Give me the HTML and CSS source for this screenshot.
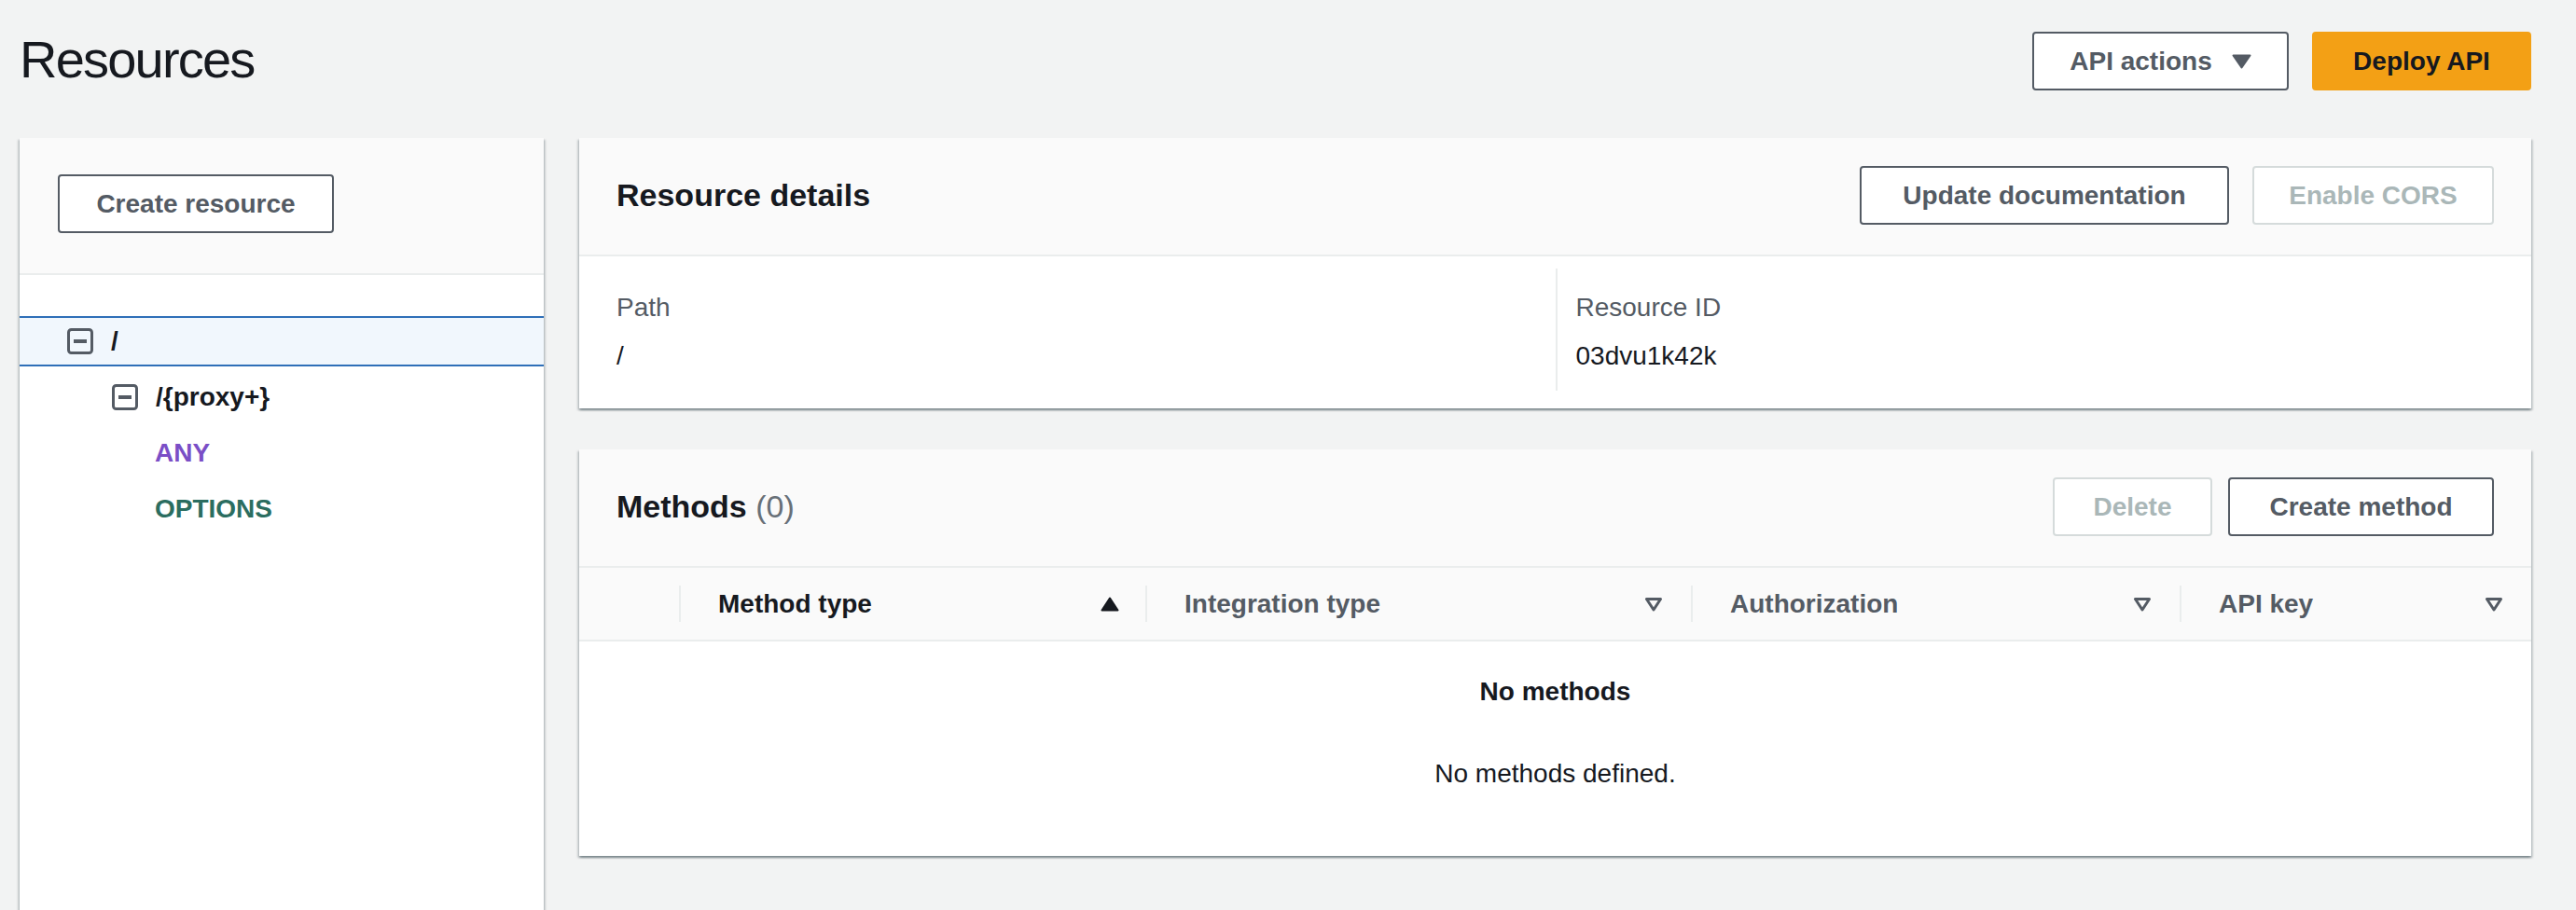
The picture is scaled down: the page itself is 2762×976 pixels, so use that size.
FILE: index.html
```html
<!DOCTYPE html>
<html lang="en">
<head>
<meta charset="utf-8">
<title>Resources</title>
<link rel="stylesheet" href="styles.css">
</head>
<body>
<div class="page">
  <header class="topbar">
    <h1 class="title">Resources</h1>
    <div class="actions">
      <button class="btn btn-dropdown">API actions
        <svg class="caret" width="21" height="16" viewBox="0 0 21 16"><path d="M1.5 1.5h18L10.5 14.5z" fill="#545b64" stroke="#545b64" stroke-width="2" stroke-linejoin="round"/></svg>
      </button>
      <button class="btn btn-primary">Deploy API</button>
    </div>
  </header>

  <div class="layout">
    <aside class="tree-panel">
      <div class="tree-toolbar">
        <button class="btn">Create resource</button>
      </div>
      <ul class="tree">
        <li class="tree-row tree-row-selected level-0">
          <svg class="toggle" width="28" height="28" viewBox="0 0 28 28"><rect x="1.5" y="1.5" width="25" height="25" rx="3" fill="none" stroke="#545b64" stroke-width="3"/><rect x="7" y="12" width="14" height="4" fill="#545b64"/></svg>
          <span class="path">/</span>
        </li>
        <li class="tree-row level-1">
          <svg class="toggle" width="28" height="28" viewBox="0 0 28 28"><rect x="1.5" y="1.5" width="25" height="25" rx="3" fill="none" stroke="#545b64" stroke-width="3"/><rect x="7" y="12" width="14" height="4" fill="#545b64"/></svg>
          <span class="path">/{proxy+}</span>
        </li>
        <li class="tree-row level-2"><span class="method method-any">ANY</span></li>
        <li class="tree-row level-2"><span class="method method-options">OPTIONS</span></li>
      </ul>
    </aside>

    <main class="content">
      <section class="panel">
        <div class="panel-header">
          <h2 class="panel-title">Resource details</h2>
          <div class="btn-group">
            <button class="btn btn-doc">Update documentation</button>
            <button class="btn btn-disabled btn-cors">Enable CORS</button>
          </div>
        </div>
        <div class="details">
          <div class="detail-col">
            <div class="detail-label">Path</div>
            <div class="detail-value">/</div>
          </div>
          <div class="detail-col detail-col-divided">
            <div class="detail-label">Resource ID</div>
            <div class="detail-value">03dvu1k42k</div>
          </div>
        </div>
      </section>

      <section class="panel">
        <div class="panel-header">
          <h2 class="panel-title">Methods <span class="count">(0)</span></h2>
          <div class="btn-group btn-group-tight">
            <button class="btn btn-disabled btn-delete">Delete</button>
            <button class="btn btn-create-method">Create method</button>
          </div>
        </div>
        <div class="table">
          <div class="thead">
            <div class="th th-select"></div>
            <div class="th"><div class="th-inner th-sorted"><span>Method type</span>
              <svg width="20" height="16" viewBox="0 0 20 16"><path d="M10 1.5L18.5 14.5H1.5z" fill="#16191f" stroke="#16191f" stroke-width="2" stroke-linejoin="round"/></svg></div></div>
            <div class="th"><div class="th-inner"><span>Integration type</span>
              <svg width="20" height="16" viewBox="0 0 20 16"><path d="M2.5 2.5h15L10 14z" fill="none" stroke="#545b64" stroke-width="3" stroke-linejoin="round"/></svg></div></div>
            <div class="th"><div class="th-inner"><span>Authorization</span>
              <svg width="20" height="16" viewBox="0 0 20 16"><path d="M2.5 2.5h15L10 14z" fill="none" stroke="#545b64" stroke-width="3" stroke-linejoin="round"/></svg></div></div>
            <div class="th"><div class="th-inner"><span>API key</span>
              <svg width="20" height="16" viewBox="0 0 20 16"><path d="M2.5 2.5h15L10 14z" fill="none" stroke="#545b64" stroke-width="3" stroke-linejoin="round"/></svg></div></div>
          </div>
          <div class="empty">
            <div class="empty-title">No methods</div>
            <div class="empty-text">No methods defined.</div>
          </div>
        </div>
      </section>
    </main>
  </div>
</div>
</body>
</html>
```

FILE: styles.css
```css
* { box-sizing: border-box; }

html, body {
  margin: 0;
  padding: 0;
}

body {
  background: #f2f3f3;
  font-family: "Liberation Sans", Arial, sans-serif;
  font-size: 28px;
  line-height: 40px;
  color: #16191f;
  overflow: hidden;
}

.page {
  width: 2762px;
  height: 976px;
}

/* top bar */
.topbar {
  height: 148px;
  padding: 34px 48px 0 21px;
  display: flex;
  justify-content: space-between;
  align-items: flex-start;
}

.title {
  margin: -2px 0 0 0;
  font-size: 56px;
  line-height: 63px;
  font-weight: 400;
  letter-spacing: -1.8px;
  color: #16191f;
}

.actions {
  display: flex;
  gap: 25px;
}

/* buttons */
.btn {
  height: 63px;
  padding: 0 40px;
  border: 2px solid #545b64;
  border-radius: 4px;
  background: #fff;
  color: #545b64;
  font-family: "Liberation Sans", Arial, sans-serif;
  font-size: 28px;
  font-weight: 700;
  line-height: 1;
  display: inline-flex;
  align-items: center;
  justify-content: center;
  white-space: nowrap;
}

.btn-dropdown {
  width: 275px;
  gap: 21px;
  padding: 0;
}

.btn-primary {
  width: 235px;
  padding: 0;
  background: #f3a015;
  border-color: #f3a015;
  color: #16191f;
}

.btn-disabled {
  border-color: #d5dbdb;
  color: #aab7b8;
}

.btn-doc { width: 396px; padding: 0; }
.btn-cors { width: 259px; padding: 0; }
.btn-delete { width: 171px; padding: 0; }
.btn-create-method { width: 285px; padding: 0; }

.btn-group {
  display: flex;
  gap: 25px;
}

.btn-group-tight { gap: 17px; }

/* layout */
.layout {
  display: flex;
  gap: 38px;
  padding: 0 48px 0 21px;
  align-items: flex-start;
}

/* tree panel */
.tree-panel {
  flex: none;
  width: 562px;
  min-height: 840px;
  background: #fff;
  box-shadow: 0 2px 2px 0 rgba(0, 28, 36, 0.3), 2px 2px 2px 0 rgba(0, 28, 36, 0.15), -2px 2px 2px 0 rgba(0, 28, 36, 0.15);
}

.tree-toolbar {
  background: #fafafa;
  padding: 39px 0 43px 41px;
  border-bottom: 2px solid #eaeded;
}

.tree-toolbar .btn {
  width: 296px;
  padding: 0;
}

.tree {
  list-style: none;
  margin: 0;
  padding: 41px 0 0 0;
}

.tree-row {
  height: 60px;
  display: flex;
  align-items: center;
  gap: 19px;
  font-weight: 700;
  font-size: 28px;
}

.tree-row-selected {
  height: 54px;
  margin: 3px 0;
  background: #f1f7fd;
  border-top: 2px solid #2f6fb8;
  border-bottom: 2px solid #2f6fb8;
}

.level-0 { padding-left: 51px; }
.level-1 { padding-left: 99px; }
.level-2 { padding-left: 145px; }

.toggle { flex: none; display: block; }

.path { color: #16191f; }

.method-any { color: #7a4ec6; }
.method-options { color: #2b6d60; }

/* content */
.content {
  flex: 1;
  display: flex;
  flex-direction: column;
  gap: 44px;
}

.panel {
  background: #fff;
  box-shadow: 0 2px 2px 0 rgba(0, 28, 36, 0.3), 2px 2px 2px 0 rgba(0, 28, 36, 0.15), -2px 2px 2px 0 rgba(0, 28, 36, 0.15);
}

.panel-header {
  background: #fafafa;
  padding: 30px 40px 32px 40px;
  border-bottom: 2px solid #eaeded;
  display: flex;
  align-items: center;
  justify-content: space-between;
}

.panel-title {
  margin: 0;
  font-size: 34px;
  line-height: 63px;
  font-weight: 700;
  color: #16191f;
}

.count {
  font-weight: 400;
  color: #687078;
}

/* details */
.details {
  padding: 13px 40px 19px 40px;
  display: grid;
  grid-template-columns: 1fr 1fr;
}

.detail-col {
  padding: 22px 0 17px 0;
}

.detail-col-divided {
  border-left: 2px solid #eaeded;
  padding-left: 20px;
}

.detail-label {
  color: #545b64;
  margin-bottom: 12px;
}

.detail-value {
  color: #16191f;
}

/* table */
.thead {
  display: grid;
  grid-template-columns: 107px 500px 585px 524px 1fr;
  background: #fafafa;
  border-bottom: 2px solid #eaeded;
}

.th {
  height: 77px;
  padding: 19px 0;
}

.th-inner {
  height: 39px;
  border-left: 2px solid #eaeded;
  padding: 0 30px 0 40px;
  display: flex;
  align-items: center;
  justify-content: space-between;
  font-weight: 700;
  color: #545b64;
}

.th-sorted {
  color: #16191f;
  padding-right: 28px;
}

.th-inner svg { display: block; flex: none; }

.empty {
  height: 230px;
  padding-top: 34px;
  text-align: center;
  color: #16191f;
}

.empty-title {
  font-weight: 700;
}

.empty-text {
  margin-top: 48px;
}
```
